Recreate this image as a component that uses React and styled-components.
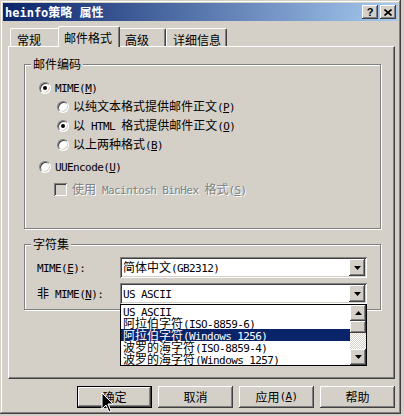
import React from "react";
import styled, { createGlobalStyle, css } from "styled-components";

const GlobalStyle = createGlobalStyle`
  html, body {
    margin: 0;
    padding: 0;
    background: #d4d0c8;
  }
  body {
    font-family: "Noto Sans CJK SC", "DejaVu Sans", sans-serif;
    font-size: 12px;
    color: #000;
  }
`;

const raised = css`
  box-shadow: inset -1px -1px #404040, inset 1px 1px #fff, inset -2px -2px #808080, inset 2px 2px #d4d0c8;
`;

const sunken = css`
  box-shadow: inset 1px 1px #808080, inset -1px -1px #fff, inset 2px 2px #404040, inset -2px -2px #d4d0c8;
`;

const Window = styled.div`
  position: relative;
  width: 401px;
  height: 414px;
  box-sizing: border-box;
  padding: 3px;
  overflow: hidden;
  background: #d4d0c8;
  box-shadow: inset -1px -1px #404040, inset 1px 1px #d4d0c8, inset -2px -2px #808080, inset 2px 2px #fff;
`;

const TitleBar = styled.div`
  height: 18px;
  display: flex;
  align-items: center;
  justify-content: space-between;
  padding: 0 2px;
  background: linear-gradient(to right, #0a246a, #a6caf0);
`;

const Title = styled.span`
  color: #fff;
  font-weight: bold;
  font-size: 12px;
  line-height: 18px;
  white-space: pre;
`;

const TitleEn = styled.span`
  font-family: "DejaVu Sans Mono", monospace;
  font-size: 12px;
  font-weight: bold;
`;

const Caps = styled.div`
  display: flex;
  gap: 2px;
`;

const CapBtn = styled.div`
  width: 16px;
  height: 14px;
  box-sizing: border-box;
  background: #d4d0c8;
  ${raised};
  display: flex;
  align-items: center;
  justify-content: center;
  font-family: "Liberation Sans", sans-serif;
  font-weight: bold;
  font-size: 11px;
  line-height: 14px;
`;

const Body = styled.div`
  padding: 5px 3px 0 5px;
`;

const TabStrip = styled.div`
  display: flex;
  align-items: flex-end;
  height: 20px;
  padding-left: 2px;
`;

const Tab = styled.div`
  position: relative;
  z-index: ${(p) => (p.$active ? 1 : 0)};
  box-sizing: border-box;
  width: ${(p) => p.$w}px;
  height: ${(p) => (p.$active ? 21 : 18)}px;
  margin: ${(p) => (p.$active ? "0 -2px -1px" : "0")};
  padding: 3px 0 0 ${(p) => (p.$active ? 5 : 6)}px;
  line-height: 16px;
  white-space: nowrap;
  background: #d4d0c8;
  border-top: 1px solid #fff;
  border-left: 1px solid #fff;
  border-right: 1px solid #404040;
  border-radius: 2px 2px 0 0;
  box-shadow: inset -1px 0 #808080;
`;

const Panel = styled.div`
  height: 333px;
  box-sizing: border-box;
  border-top: 1px solid #fff;
  border-left: 1px solid #fff;
  border-right: 1px solid #404040;
  border-bottom: 1px solid #404040;
  box-shadow: inset -1px -1px #808080;
  padding: 10px 13px 0 15px;
`;

const Group = styled.fieldset`
  margin: ${(p) => p.$mt || 0}px 0 0;
  padding: 0;
  min-width: 0;
  border: 1px solid #808080;
  box-shadow: inset 1px 1px #fff, 1px 1px #fff;
`;

const Legend = styled.legend`
  margin-left: 6px;
  padding: 0 2px;
  line-height: 14px;
  background: #d4d0c8;
`;

const GroupBody = styled.div`
  padding: ${(p) => p.$pad};
`;

const OptionRow = styled.div`
  display: flex;
  align-items: center;
  gap: 4px;
  height: 19px;
  margin-left: ${(p) => p.$indent || 0}px;
  margin-top: ${(p) => p.$mt || 0}px;
  white-space: nowrap;
  line-height: 14px;
  color: ${(p) => (p.$disabled ? "#808080" : "#000")};
  text-shadow: ${(p) => (p.$disabled ? "1px 1px #fff" : "none")};
`;

const Radio = styled.span`
  flex: none;
  box-sizing: border-box;
  width: 12px;
  height: 12px;
  border-radius: 50%;
  border: 1px solid;
  border-color: #808080 #fff #fff #808080;
  background: #fff;
  box-shadow: inset 1px 1px #404040, inset -1px -1px #d4d0c8;
  display: flex;
  align-items: center;
  justify-content: center;

  &::after {
    content: "";
    display: ${(p) => (p.$on ? "block" : "none")};
    width: 4px;
    height: 4px;
    border-radius: 50%;
    background: #000;
  }
`;

const Check = styled.span`
  flex: none;
  box-sizing: border-box;
  width: 13px;
  height: 13px;
  margin-right: 1px;
  background: #d4d0c8;
  ${sunken};
`;

const En = styled.span`
  font-family: "DejaVu Sans Mono", monospace;
  font-size: 11px;
  letter-spacing: -0.6px;
`;

const FieldRow = styled.div`
  display: flex;
  align-items: center;
  height: 21px;
  margin-top: ${(p) => p.$mt || 0}px;
`;

const FieldLabel = styled.div`
  width: 83px;
  flex: none;
  white-space: nowrap;
  line-height: 14px;
`;

const ComboWrap = styled.div`
  position: relative;
`;

const Combo = styled.div`
  width: 247px;
  height: 21px;
  box-sizing: border-box;
  padding: 2px;
  display: flex;
  align-items: center;
  background: #fff;
  ${sunken};
`;

const ComboText = styled.div`
  flex: 1;
  padding-left: 1px;
  line-height: 17px;
  white-space: nowrap;
`;

const ArrowBtn = styled.div`
  flex: none;
  width: 16px;
  height: ${(p) => p.$h || 16}px;
  box-sizing: border-box;
  background: #d4d0c8;
  ${raised};
  display: flex;
  align-items: center;
  justify-content: center;
`;

const DropList = styled.div`
  position: absolute;
  top: 100%;
  left: 0;
  z-index: 2;
  width: 247px;
  height: 62px;
  box-sizing: border-box;
  border: 1px solid #000;
  background: #fff;
  display: flex;
`;

const Items = styled.div`
  flex: 1;
  min-width: 0;
`;

const Item = styled.div`
  height: 12px;
  line-height: 12px;
  padding-left: 2px;
  white-space: nowrap;
  background: ${(p) => (p.$sel ? "#0a246a" : "transparent")};
  color: ${(p) => (p.$sel ? "#fff" : "#000")};
`;

const ScrollBar = styled.div`
  width: 16px;
  display: flex;
  flex-direction: column;
`;

const Thumb = styled.div`
  height: 12px;
  background: #d4d0c8;
  ${raised};
`;

const Track = styled.div`
  flex: 1;
  background: repeating-conic-gradient(#fff 0 25%, #d4d0c8 0 50%) 0 0 / 2px 2px;
`;

const ButtonRow = styled.div`
  display: flex;
  justify-content: flex-end;
  gap: 6px;
  margin-top: 7px;
`;

const PushButton = styled.div`
  width: 75px;
  height: 22px;
  box-sizing: border-box;
  display: flex;
  align-items: center;
  justify-content: center;
  line-height: 14px;
  background: #d4d0c8;
  border: ${(p) => (p.$default ? "1px solid #000" : "none")};
  ${raised};
`;

const Cursor = styled.svg`
  position: absolute;
  left: 101px;
  top: 392px;
`;

const Tri = ({ up }) => (
  <svg width="7" height="4" viewBox="0 0 7 4">
    <polygon points={up ? "3.5,0 7,4 0,4" : "0,0 7,0 3.5,4"} fill="#000" />
  </svg>
);

const tabs = [
  { label: "常规", w: 50 },
  { label: "邮件格式", w: 62, active: true },
  { label: "高级", w: 48 },
  { label: "详细信息", w: 61 },
];

const charsets = [
  <En>US ASCII</En>,
  <>阿拉伯字符<En>(ISO-8859-6)</En></>,
  <>阿拉伯字符<En>(Windows 1256)</En></>,
  <>波罗的海字符<En>(ISO-8859-4)</En></>,
  <>波罗的海字符<En>(Windows 1257)</En></>,
];

export default function App() {
  return (
    <>
      <GlobalStyle />
      <Window>
        <TitleBar>
          <Title>
            <TitleEn>heinfo</TitleEn>策略<TitleEn> </TitleEn>属性
          </Title>
          <Caps>
            <CapBtn>?</CapBtn>
            <CapBtn>
              <svg width="8" height="7" viewBox="0 0 8 7">
                <path d="M0.5 0.5 L7.5 6.5 M7.5 0.5 L0.5 6.5" stroke="#000" strokeWidth="1.6" />
              </svg>
            </CapBtn>
          </Caps>
        </TitleBar>

        <Body>
          <TabStrip>
            {tabs.map((t) => (
              <Tab key={t.label} $w={t.w} $active={t.active}>
                {t.label}
              </Tab>
            ))}
          </TabStrip>

          <Panel>
            <Group>
              <Legend>邮件编码</Legend>
              <GroupBody $pad="7px 12px 29px 14px">
                <OptionRow>
                  <Radio $on />
                  <span>
                    <En>MIME(<u>M</u>)</En>
                  </span>
                </OptionRow>
                <OptionRow $indent={18}>
                  <Radio />
                  <span>
                    以纯文本格式提供邮件正文<En>(<u>P</u>)</En>
                  </span>
                </OptionRow>
                <OptionRow $indent={18}>
                  <Radio $on />
                  <span>
                    以<En> HTML </En>格式提供邮件正文<En>(<u>O</u>)</En>
                  </span>
                </OptionRow>
                <OptionRow $indent={18}>
                  <Radio />
                  <span>
                    以上两种格式<En>(<u>B</u>)</En>
                  </span>
                </OptionRow>
                <OptionRow $mt={3}>
                  <Radio />
                  <span>
                    <En>UUEncode(<u>U</u>)</En>
                  </span>
                </OptionRow>
                <OptionRow $indent={15} $mt={4} $disabled>
                  <Check />
                  <span>
                    使用<En> Macintosh BinHex </En>格式<En>(<u>S</u>)</En>
                  </span>
                </OptionRow>
              </GroupBody>
            </Group>

            <Group $mt={8}>
              <Legend>字符集</Legend>
              <GroupBody $pad="6px 12px 5px 12px">
                <FieldRow>
                  <FieldLabel>
                    <En>MIME(<u>E</u>):</En>
                  </FieldLabel>
                  <Combo>
                    <ComboText>
                      简体中文<En>(GB2312)</En>
                    </ComboText>
                    <ArrowBtn $h={17}>
                      <Tri />
                    </ArrowBtn>
                  </Combo>
                </FieldRow>
                <FieldRow $mt={5}>
                  <FieldLabel>
                    非<En> MIME(<u>N</u>):</En>
                  </FieldLabel>
                  <ComboWrap>
                    <Combo>
                      <ComboText>
                        <En>US ASCII</En>
                      </ComboText>
                      <ArrowBtn $h={17}>
                        <Tri />
                      </ArrowBtn>
                    </Combo>
                    <DropList>
                      <Items>
                        {charsets.map((c, i) => (
                          <Item key={i} $sel={i === 2}>
                            {c}
                          </Item>
                        ))}
                      </Items>
                      <ScrollBar>
                        <ArrowBtn>
                          <Tri up />
                        </ArrowBtn>
                        <Thumb />
                        <Track />
                        <ArrowBtn>
                          <Tri />
                        </ArrowBtn>
                      </ScrollBar>
                    </DropList>
                  </ComboWrap>
                </FieldRow>
              </GroupBody>
            </Group>
          </Panel>

          <ButtonRow>
            <PushButton $default>确定</PushButton>
            <PushButton>取消</PushButton>
            <PushButton>
              应用<En>(<u>A</u>)</En>
            </PushButton>
            <PushButton>帮助</PushButton>
          </ButtonRow>
        </Body>

        <Cursor width="14" height="22" viewBox="0 0 14 22">
          <polygon
            points="1,1 1,17 5,13 8,20 10,19 7,12 12,12"
            fill="#000"
            stroke="#fff"
            strokeWidth="1"
          />
        </Cursor>
      </Window>
    </>
  );
}
